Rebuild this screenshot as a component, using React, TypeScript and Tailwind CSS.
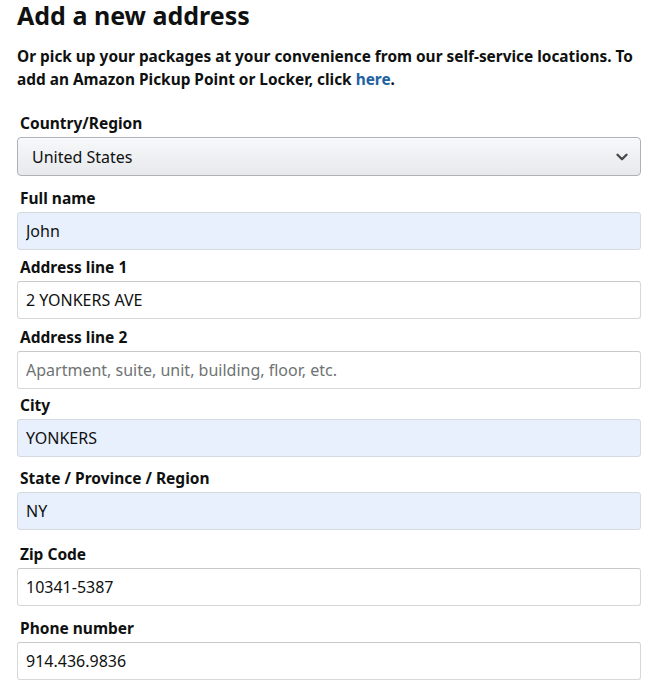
import { ChevronDown } from "lucide-react";

type Field = {
  label: string;
  value?: string;
  placeholder?: string;
  filled?: boolean;
  mt: string;
};

const fields: Field[] = [
  { label: "Full name", value: "John", filled: true, mt: "mt-[12px]" },
  { label: "Address line 1", value: "2 YONKERS AVE", mt: "mt-[7px]" },
  {
    label: "Address line 2",
    placeholder: "Apartment, suite, unit, building, floor, etc.",
    mt: "mt-[8px]",
  },
  { label: "City", value: "YONKERS", filled: true, mt: "mt-[6px]" },
  { label: "State / Province / Region", value: "NY", filled: true, mt: "mt-[11px]" },
  { label: "Zip Code", value: "10341-5387", mt: "mt-[14px]" },
  { label: "Phone number", value: "914.436.9836", mt: "mt-[12px]" },
];

function Label({ children }: { children: React.ReactNode }) {
  return (
    <div className="pl-[3px] mb-1 text-[15.5px] leading-[20px] font-bold text-[#0f1111]">
      {children}
    </div>
  );
}

export default function App() {
  return (
    <div
      className="w-[671px] h-[682px] bg-white overflow-hidden text-[#0f1111]"
      style={{ fontFamily: '"Noto Sans", "Open Sans", sans-serif' }}
    >
      <div className="pl-[17px] pr-[30px]">
        <h1 className="text-[25px] leading-[30px] font-bold">Add a new address</h1>
        <p className="mt-[15px] mr-[-22px] text-[15.4px] leading-[23px] font-bold">
          Or pick up your packages at your convenience from our self-service locations. To
          add an Amazon Pickup Point or Locker, click{" "}
          <a href="#" className="text-[#2162a1]">
            here
          </a>
          .
        </p>

        <div className="mt-[22px]">
          <Label>Country/Region</Label>
          <div className="h-[39px] flex items-center justify-between rounded-[4px] border border-[#adb1b8] bg-gradient-to-b from-[#f7f8fa] to-[#e7e9ec] pl-[14px] pr-[9px] shadow-[0_1px_0_rgba(255,255,255,0.6)_inset]">
            <span className="text-[16px]">United States</span>
            <ChevronDown className="w-[18px] h-[18px] text-[#4a4a4a]" strokeWidth={3.2} />
          </div>
        </div>

        {fields.map((f) => (
          <div key={f.label} className={f.mt}>
            <Label>{f.label}</Label>
            <input
              readOnly
              value={f.value ?? ""}
              placeholder={f.placeholder}
              className={`block w-full h-[38px] rounded-[3px] border px-[8px] text-[16px] text-[#0f1111] placeholder:text-[#6f7373] outline-none ${
                f.filled
                  ? "bg-[#e8f0fe] border-[#d5d9e0]"
                  : "bg-white border-[#d5d9d9] border-t-[#c7caca]"
              }`}
              style={{ fontFamily: '"Noto Sans", "Open Sans", sans-serif' }}
            />
          </div>
        ))}
      </div>
    </div>
  );
}
